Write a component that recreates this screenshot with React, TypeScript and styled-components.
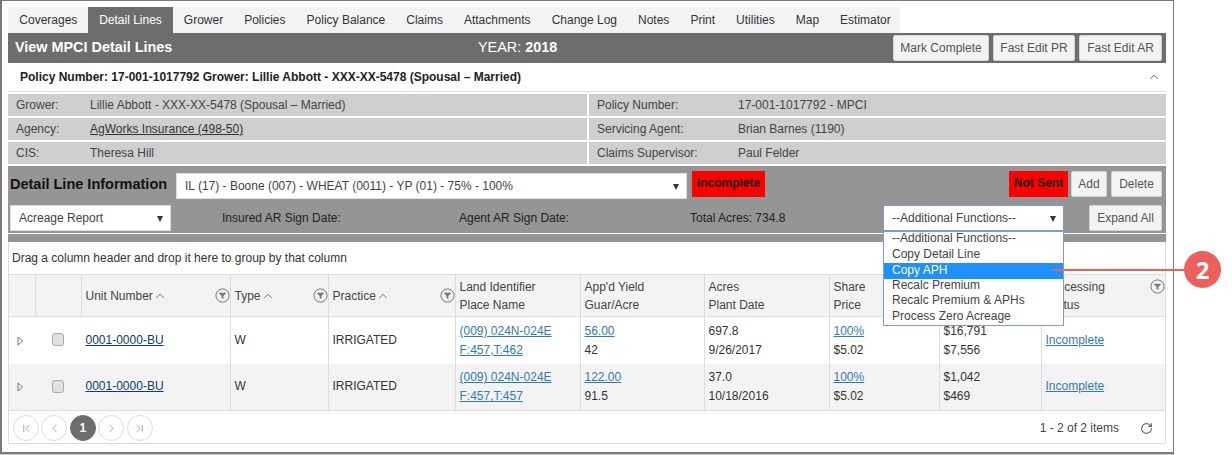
import React from "react";
import styled, { createGlobalStyle } from "styled-components";
import { ChevronFirst, ChevronLast, ChevronLeft, ChevronRight, ChevronUp, RotateCw } from "lucide-react";

const Global = createGlobalStyle`
  html, body { margin: 0; padding: 0; background: #fff; }
  body { font: 12px/1.2 "Liberation Sans", Arial, sans-serif; color: #333; }
  * { box-sizing: border-box; }
`;

const Stage = styled.div`
  position: relative;
  width: 1232px;
  height: 455px;
  overflow: hidden;
`;
const Frame = styled.div`
  width: 1174px;
  height: 454px;
  padding: 6px 7px 0 6px;
  border: solid #7a7a7a;
  border-width: 1px 1px 2px 2px;
  box-shadow: 0 1px 0 #ccc;
`;
const Tabs = styled.div`
  display: flex;
  width: 892px;
  height: 26px;
  background: #f3f3f3;
`;
const Tab = styled.div<{ $active?: boolean }>`
  padding: 0 10.5px;
  line-height: 26px;
  color: ${(p) => (p.$active ? "#fff" : "#333")};
  background: ${(p) => (p.$active ? "#6d6d6d" : "transparent")};
  white-space: nowrap;
  &:first-child { padding: 0 10.3px 0 11.3px; }
  &:nth-child(2) { padding: 0 11.5px; }
`;
const Header = styled.div`
  display: flex;
  align-items: center;
  height: 30px;
  background: #6d6d6d;
  color: #fff;
  padding: 0 4px 0 7px;
`;
const Title = styled.div`
  width: 463px;
  font-size: 14.4px;
  font-weight: 700;
`;
const Year = styled.div`
  font-size: 14.4px;
  b { font-weight: 700; }
`;
const HeaderActions = styled.div`
  margin-left: auto;
  display: flex;
  gap: 4px;
`;
const Button = styled.button<{ $w: number }>`
  width: ${(p) => p.$w}px;
  height: 26px;
  padding: 0;
  background: #f3f3f3;
  border: 1px solid #d4d4d4;
  border-radius: 2px;
  color: #555;
  font: 12px "Liberation Sans", Arial, sans-serif;
`;
const PolicyBar = styled.div`
  display: flex;
  align-items: center;
  justify-content: space-between;
  height: 29px;
  padding: 0 5px 0 12px;
  border-bottom: 1px solid #ddd;
  font-weight: 700;
  color: #222;
  svg { color: #555; }
`;
const InfoGrid = styled.div`
  display: grid;
  grid-template-columns: 579px 577px;
  grid-auto-rows: 22px;
  gap: 2px;
  padding-top: 2px;
`;
const InfoCell = styled.div`
  display: flex;
  align-items: center;
  background: #cfcfcf;
  padding-left: 8px;
  color: #444;
`;
const InfoLabel = styled.div<{ $w: number }>`
  width: ${(p) => p.$w}px;
`;
const InfoLink = styled.a`
  color: #333;
  text-decoration: underline;
`;
const Panel = styled.div`
  margin-top: 2px;
  height: 68px;
  background: #959595;
  padding: 5px 4px 0 2px;
  border-bottom: 1px solid #fff;
  color: #222;
`;
const PanelBar = styled.div`
  height: 8px;
  background: #959595;
`;
const PanelRow = styled.div`
  display: flex;
  align-items: flex-start;
  height: 34px;
`;
const PanelTitle = styled.div`
  width: 166px;
  font-size: 14.5px;
  font-weight: 700;
  line-height: 26px;
  color: #111;
`;
const FakeSelect = styled.div<{ $w: number; $open?: boolean }>`
  position: relative;
  width: ${(p) => p.$w}px;
  height: 26px;
  line-height: 24px;
  padding-left: 8px;
  background: #fff;
  border: 1px solid ${(p) => (p.$open ? "#7f9bd1" : "#ddd")};
  color: #444;
  &::after {
    content: "";
    position: absolute;
    right: 7px;
    top: 10px;
    border-left: 3.5px solid transparent;
    border-right: 3.5px solid transparent;
    border-top: 6px solid #333;
  }
`;
const MainSelect = styled(FakeSelect)`
  margin-top: 2px;
`;
const Flag = styled.div<{ $w: number; $ml: number }>`
  width: ${(p) => p.$w}px;
  margin-left: ${(p) => p.$ml}px;
  height: 26px;
  line-height: 25px;
  text-align: center;
  background: #f00;
  color: #111;
  font-weight: 700;
`;
const PushRight = styled.div`
  margin-left: auto;
  display: flex;
  gap: 4px;
`;
const NotSentGroup = styled(PushRight)`
  ${Flag} { margin-right: -1px; }
`;
const FieldText = styled.div<{ $w: number }>`
  width: ${(p) => p.$w}px;
  line-height: 26px;
  color: #222;
`;
const Spacer = styled.div`
  width: 51px;
`;
const Menu = styled.div`
  position: absolute;
  left: 883px;
  top: 231px;
  width: 181px;
  height: 95px;
  background: #fff;
  border: 1px solid #7f9bd1;
  z-index: 2;
`;
const MenuItem = styled.div<{ $active?: boolean }>`
  height: 15.6px;
  line-height: ${(p) => (p.$active ? "15px" : "13.8px")};
  padding-left: 8px;
  color: ${(p) => (p.$active ? "#fff" : "#444")};
  background: ${(p) => (p.$active ? "#1e90ff" : "transparent")};
`;
const Grid = styled.div`
  width: 1158px;
  height: 202px;
  border: 1px solid #ddd;
  border-top: 0;
`;
const GroupHint = styled.div`
  height: 32px;
  line-height: 33px;
  padding-left: 3px;
  color: #333;
`;
const Table = styled.table`
  width: 1156px;
  table-layout: fixed;
  border-collapse: collapse;
`;
const Th = styled.th`
  height: 42px;
  padding: 0 4px;
  background: #f3f3f3;
  border: 1px solid #ddd;
  font-weight: 400;
  text-align: left;
  color: #444;
  line-height: 18px;
  position: relative;
  &:first-child { border-left: 0; }
  &:last-child { border-right: 0; }
`;
const Td = styled.td<{ $alt?: boolean }>`
  padding: 0 4px;
  height: 47px;
  line-height: 19px;
  background: ${(p) => (p.$alt ? "#f3f3f3" : "#fff")};
  border: 1px solid #ddd;
  border-width: 0 1px 0 1px;
  color: #333;
  &:first-child { border-left: 0; }
  &:last-child { border-right: 0; }
`;
const CenterTd = styled(Td)`
  text-align: center;
  border-color: transparent;
`;
const ExpandTd = styled(CenterTd)`
  padding: 4px 3px 0 0;
`;
const Body = styled.tbody`
  tr:last-child td { border-bottom: 1px solid #ddd; }
`;
const HeadLabel = styled.span`
  display: inline-flex;
  align-items: center;
  svg { color: #555; }
`;
const FilterSlot = styled.span<{ $top?: number }>`
  position: absolute;
  right: 0;
  top: ${(p) => p.$top ?? 13}px;
  width: 15px;
  height: 15px;
  display: block;
`;
const UnitLink = styled.a`
  color: #0b3c6b;
  text-decoration: underline;
`;
const BlueLink = styled.a`
  color: #337ab7;
  text-decoration: underline;
  display: inline-block;
`;
const Stack = styled.div`
  padding-top: 1px;
`;
const Check = styled.input`
  appearance: none;
  display: block;
  margin: 0 auto 1px;
  width: 12px;
  height: 13px;
  border: 1px solid #aaa;
  border-radius: 3px;
  background: #e2e2e2;
`;
const Pager = styled.div`
  display: flex;
  align-items: center;
  height: 34px;
  padding: 0 12px 0 4px;
`;
const PageButton = styled.div<{ $current?: boolean }>`
  width: 26px;
  height: 26px;
  margin-right: 2.4px;
  border-radius: 50%;
  border: 1px solid ${(p) => (p.$current ? "#6d6d6d" : "#ddd")};
  background: ${(p) => (p.$current ? "#6d6d6d" : "#fff")};
  color: ${(p) => (p.$current ? "#fff" : "#777")};
  font-weight: 700;
  display: flex;
  align-items: center;
  justify-content: center;
`;
const PagerInfo = styled.div`
  margin-left: auto;
  color: #444;
  margin-right: 21px;
`;
const Refresh = styled.div`
  display: flex;
  color: #666;
`;
const CalloutLine = styled.div`
  position: absolute;
  left: 1053px;
  top: 269px;
  width: 135px;
  height: 2px;
  background: #ec5f5b;
  z-index: 3;
`;
const CalloutBadge = styled.div`
  position: absolute;
  left: 1184px;
  top: 251px;
  width: 37px;
  height: 37px;
  border-radius: 50%;
  background: #ec5f5b;
  color: #fff;
  font: 700 24px/37px "Open Sans", "Liberation Sans", sans-serif;
  text-align: center;
  z-index: 3;
`;

const FilterIcon = () => (
  <svg width="15" height="15" viewBox="0 0 15 15" aria-hidden="true">
    <circle cx="7.5" cy="7.5" r="6.6" fill="#f3f3f3" stroke="#777" strokeWidth="1" />
    <path d="M3.6 4.8h7.8L8.4 8v2.9l-1.8-.9V8z" fill="#777" />
  </svg>
);
const ExpandIcon = () => (
  <svg width="7" height="10" viewBox="0 0 7 10" aria-hidden="true">
    <path d="M1 1l4.6 4-4.6 4z" fill="none" stroke="#777" strokeWidth="1" />
  </svg>
);

const tabs = ["Coverages", "Detail Lines", "Grower", "Policies", "Policy Balance", "Claims", "Attachments", "Change Log", "Notes", "Print", "Utilities", "Map", "Estimator"];
const menu = ["--Additional Functions--", "Copy Detail Line", "Copy APH", "Recalc Premium", "Recalc Premium & APHs", "Process Zero Acreage"];
const widths = [26, 46, 149, 98, 127, 125, 124, 125, 110, 102, 124];
const rows = [
  { yield: "56.00", guar: "42", acres: "697.8", date: "9/26/2017", a: "$16,791", b: "$7,556" },
  { yield: "122.00", guar: "91.5", acres: "37.0", date: "10/18/2016", a: "$1,042", b: "$469" },
];

const Sort = ({ children }: { children: React.ReactNode }) => (
  <HeadLabel>
    {children}
    <ChevronUp size={14} strokeWidth={1.4} />
  </HeadLabel>
);

export default function App() {
  return (
    <Stage>
      <Global />
      <Frame>
        <Tabs>
          {tabs.map((t) => (
            <Tab key={t} $active={t === "Detail Lines"}>{t}</Tab>
          ))}
        </Tabs>
        <Header>
          <Title>View MPCI Detail Lines</Title>
          <Year>YEAR: <b>2018</b></Year>
          <HeaderActions>
            <Button $w={96}>Mark Complete</Button>
            <Button $w={82}>Fast Edit PR</Button>
            <Button $w={83}>Fast Edit AR</Button>
          </HeaderActions>
        </Header>
        <PolicyBar>
          <span>Policy Number: 17-001-1017792 Grower: Lillie Abbott - XXX-XX-5478 (Spousal – Married)</span>
          <ChevronUp size={14} strokeWidth={1.6} />
        </PolicyBar>
        <InfoGrid>
          <InfoCell><InfoLabel $w={74}>Grower:</InfoLabel>Lillie Abbott - XXX-XX-5478 (Spousal – Married)</InfoCell>
          <InfoCell><InfoLabel $w={141}>Policy Number:</InfoLabel>17-001-1017792 - MPCI</InfoCell>
          <InfoCell><InfoLabel $w={74}>Agency:</InfoLabel><InfoLink>AgWorks Insurance (498-50)</InfoLink></InfoCell>
          <InfoCell><InfoLabel $w={141}>Servicing Agent:</InfoLabel>Brian Barnes (1190)</InfoCell>
          <InfoCell><InfoLabel $w={74}>CIS:</InfoLabel>Theresa Hill</InfoCell>
          <InfoCell><InfoLabel $w={141}>Claims Supervisor:</InfoLabel>Paul Felder</InfoCell>
        </InfoGrid>
        <Panel>
          <PanelRow>
            <PanelTitle>Detail Line Information</PanelTitle>
            <MainSelect $w={511}>IL (17) - Boone (007) - WHEAT (0011) - YP (01) - 75% - 100%</MainSelect>
            <Flag $w={73} $ml={5}>Incomplete</Flag>
            <NotSentGroup>
              <Flag $w={59} $ml={0}>Not Sent</Flag>
              <Button $w={36}>Add</Button>
              <Button $w={51}>Delete</Button>
            </NotSentGroup>
          </PanelRow>
          <PanelRow>
            <FakeSelect $w={161}>Acreage Report</FakeSelect>
            <Spacer />
            <FieldText $w={237}>Insured AR Sign Date:</FieldText>
            <FieldText $w={231}>Agent AR Sign Date:</FieldText>
            <FieldText $w={193}>Total Acres: 734.8</FieldText>
            <FakeSelect $w={181} $open>--Additional Functions--</FakeSelect>
            <PushRight>
              <Button $w={73}>Expand All</Button>
            </PushRight>
          </PanelRow>
        </Panel>
        <PanelBar />
        <Grid>
          <GroupHint>Drag a column header and drop it here to group by that column</GroupHint>
          <Table>
            <colgroup>
              {widths.map((w, i) => <col key={i} style={{ width: w }} />)}
            </colgroup>
            <thead>
              <tr>
                <Th />
                <Th />
                <Th><Sort>Unit Number</Sort><FilterSlot><FilterIcon /></FilterSlot></Th>
                <Th><Sort>Type</Sort><FilterSlot><FilterIcon /></FilterSlot></Th>
                <Th><Sort>Practice</Sort><FilterSlot><FilterIcon /></FilterSlot></Th>
                <Th>Land Identifier<br />Place Name</Th>
                <Th>App'd Yield<br />Guar/Acre</Th>
                <Th>Acres<br />Plant Date</Th>
                <Th>Share<br />Price</Th>
                <Th />
                <Th>Processing<br />Status<FilterSlot $top={4}><FilterIcon /></FilterSlot></Th>
              </tr>
            </thead>
            <Body>
              {rows.map((r, i) => {
                const alt = i === 1;
                return (
                  <tr key={i}>
                    <ExpandTd $alt={alt}><ExpandIcon /></ExpandTd>
                    <CenterTd $alt={alt}><Check type="checkbox" aria-label="Select row" /></CenterTd>
                    <Td $alt={alt}><UnitLink>0001-0000-BU</UnitLink></Td>
                    <Td $alt={alt}>W</Td>
                    <Td $alt={alt}>IRRIGATED</Td>
                    <Td $alt={alt}><Stack><BlueLink>(009) 024N-024E</BlueLink><br /><BlueLink>{i === 0 ? "F:457,T:462" : "F:457,T:457"}</BlueLink></Stack></Td>
                    <Td $alt={alt}><Stack><BlueLink>{r.yield}</BlueLink><br />{r.guar}</Stack></Td>
                    <Td $alt={alt}><Stack>{r.acres}<br />{r.date}</Stack></Td>
                    <Td $alt={alt}><Stack><BlueLink>100%</BlueLink><br />$5.02</Stack></Td>
                    <Td $alt={alt}><Stack>{r.a}<br />{r.b}</Stack></Td>
                    <Td $alt={alt}><BlueLink>Incomplete</BlueLink></Td>
                  </tr>
                );
              })}
            </Body>
          </Table>
          <Pager>
            <PageButton><ChevronFirst size={13} strokeWidth={1.2} /></PageButton>
            <PageButton><ChevronLeft size={13} strokeWidth={1.2} /></PageButton>
            <PageButton $current>1</PageButton>
            <PageButton><ChevronRight size={13} strokeWidth={1.2} /></PageButton>
            <PageButton><ChevronLast size={13} strokeWidth={1.2} /></PageButton>
            <PagerInfo>1 - 2 of 2 items</PagerInfo>
            <Refresh><RotateCw size={13} strokeWidth={2} /></Refresh>
          </Pager>
        </Grid>
      </Frame>
      <Menu>
        {menu.map((m) => (
          <MenuItem key={m} $active={m === "Copy APH"}>{m}</MenuItem>
        ))}
      </Menu>
      <CalloutLine />
      <CalloutBadge>2</CalloutBadge>
    </Stage>
  );
}
